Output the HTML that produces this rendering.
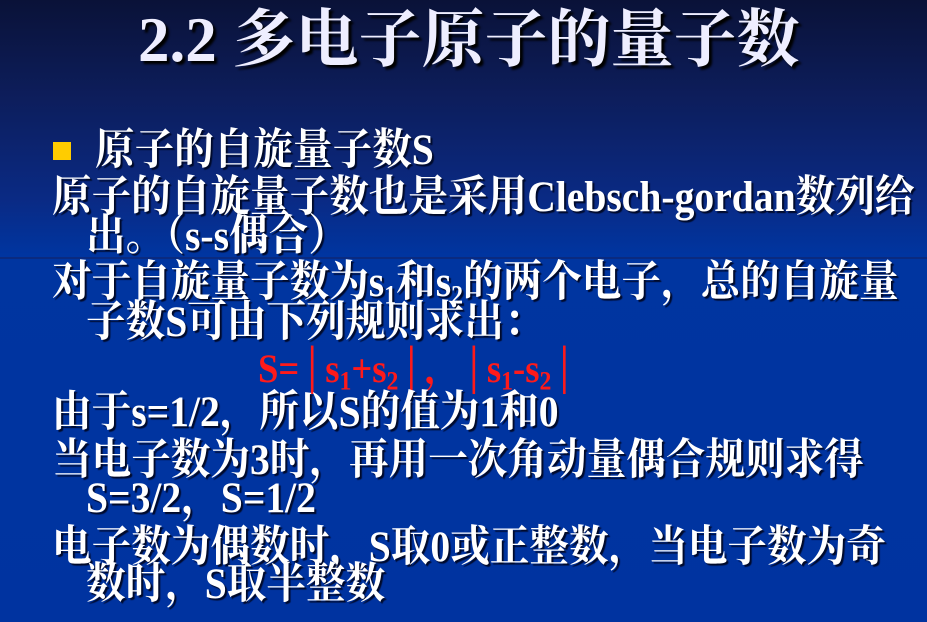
<!DOCTYPE html>
<html><head><meta charset="utf-8"><style>
html,body{margin:0;padding:0}
body{width:927px;height:622px;overflow:hidden;position:relative;
background:linear-gradient(180deg,#0a1238 0%,#0d1d5a 15%,#0a2a84 32%,#0035a0 41%,#0033a0 100%);
font-family:"Liberation Serif","Noto Serif CJK SC",serif;font-weight:bold;color:#fff}
.l{position:absolute;white-space:nowrap;font-size:40px;line-height:40px;text-shadow:2px 2px 1px #000a2a;transform-origin:0 50%;transform:scale(0.99,1.08)}
.t{position:absolute;left:138px;top:6px;font-size:63px;line-height:68px;white-space:nowrap;color:#eeeeff;text-shadow:3px 3px 2px #000}
.sep{position:absolute;left:0;top:257px;width:927px;height:2px;background:#0a2a80}
sub{font-size:24px;vertical-align:-7px;line-height:0}
.r{color:#ff1a1a;text-shadow:none;font-size:37px}
.b{position:absolute;left:53px;top:142px;width:18px;height:18px;background:#ffcc00}
</style></head><body>
<div class="sep"></div>
<div class="t">2.2 多电子原子的量子数</div>
<div class="b"></div>
<div class="l" style="left:95px;top:130px">原子的自旋量子数S</div>
<div class="l" style="left:52px;top:177px">原子的自旋量子数也是采用Clebsch-gordan数列给</div>
<div class="l" style="left:86px;top:216px">出。（s-s偶合）</div>
<div class="l" style="left:52px;top:262px">对于自旋量子数为s<sub>1</sub>和s<sub>2</sub>的两个电子，总的自旋量</div>
<div class="l" style="left:86px;top:302px">子数S可由下列规则求出：</div>
<div class="l r" style="left:258px;top:350px">S=│s<sub>1</sub>+s<sub>2</sub>│，│s<sub>1</sub>-s<sub>2</sub>│</div>
<div class="l" style="left:52px;top:392px">由于s=1/2，所以S的值为1和0</div>
<div class="l" style="left:52px;top:440px">当电子数为3时，再用一次角动量偶合规则求得</div>
<div class="l" style="left:86px;top:478px">S=3/2，S=1/2</div>
<div class="l" style="left:52px;top:527px">电子数为偶数时，S取0或正整数，当电子数为奇</div>
<div class="l" style="left:86px;top:564px">数时，S取半整数</div>
</body></html>
